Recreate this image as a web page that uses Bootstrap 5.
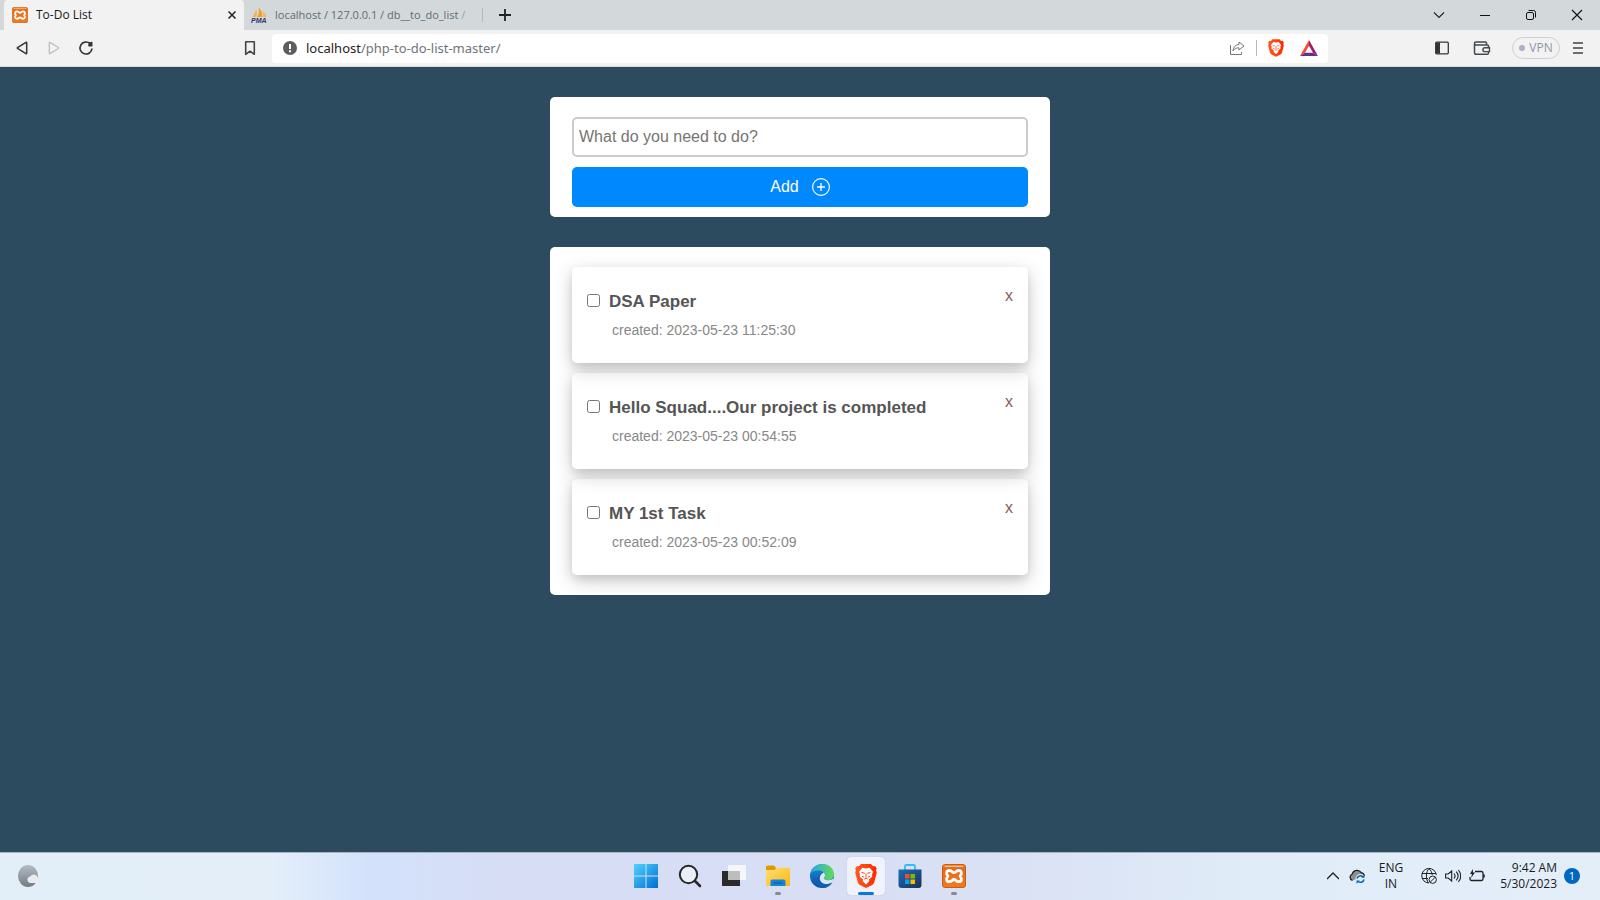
<!DOCTYPE html>
<html lang="en">
<head>
<meta charset="utf-8">
<meta name="viewport" content="width=device-width, initial-scale=1">
<title>To-Do List</title>
<link href="https://cdn.jsdelivr.net/npm/bootstrap@5.3.0/dist/css/bootstrap.min.css" rel="stylesheet">
<style>
  body { font-family: "Open Sans", "Noto Sans", sans-serif; font-size: 12px; line-height: 16px; color: #1b1b1b; background: #2c4b5e; }
  svg { display: block; flex: none; }
  button { color: inherit; }
  .plain { border: 0; background: none; padding: 0; }

  .tabstrip { height: 30px; background: #d3d8db; }
  .tab { width: 240px; height: 30px; }
  .tab.current { background: #f2f2f2; border-radius: 4px 4px 0 0; }
  .tab.other { width: 238px; color: #666b70; font-size: 11px; padding: 0 7px; }
  .tab-title { white-space: nowrap; }
  .tab.other .fade-end { opacity: .5; }
  .split { width: 1px; background: #b4b9bc; }
  .caption { gap: 30px; padding-right: 15px; }

  .toolbar { height: 37px; background: #f2f2f2; border-bottom: 1px solid #d5dadc; }
  .nav-tools { width: 272px; padding: 0 14px; }
  .address { height: 29px; background: #fff; border-radius: 4px; padding: 0 10px 0 11px; }
  .url { font-family: "Noto Sans", "Open Sans", sans-serif; font-size: 13px; color: #6f7479; text-decoration: none; margin-left: 9px; }
  .url b { font-weight: 400; color: #1f2124; }
  .address .split { height: 16px; margin: 0 11px; }
  .side-tools { width: 272px; padding-right: 17px; }
  .wallet { margin: 0 21px 0 24px; }
  .vpn { height: 22px; width: 48px; border: 1px solid #cdcfd2; border-radius: 11px; color: #8d97a5; gap: 4px; }
  .vpn-dot { width: 6px; height: 6px; border-radius: 3px; background: #adb0c4; }
  .menu-btn { margin-left: 13px; }

  .app { font-family: "Liberation Sans", Arial, sans-serif; font-size: 16px; line-height: 20px; padding-top: 30px; }
  .panel { width: 500px; max-width: 100%; background: #fff; border-radius: 5px; padding: 20px 22px; margin: 0 auto 30px; }
  .panel.add { padding-bottom: 10px; }
  .panel.add input { height: 40px; border: 2px solid #ccc; border-radius: 5px; padding: 0 5px; color: #333; }
  .panel.add input::placeholder { color: #757575; opacity: 1; }
  .add-btn { height: 40px; border: 0; border-radius: 5px; background: #08f; color: #fff; gap: 13px; margin-top: 10px; }
  .todo { height: 96px; border-radius: 5px; padding: 19px 15px; box-shadow: 0 4px 8px 0 rgba(0,0,0,.1), 0 6px 20px 0 rgba(0,0,0,.19); }
  .todo + .todo { margin-top: 10px; }
  .todo-head { gap: 9px; }
  .todo input { width: 13px; height: 13px; margin: 8px 0 0; }
  .todo label { font-size: 17px; line-height: 32px; font-weight: 700; color: #555; }
  .todo-date { font-size: 14px; color: #888; padding-left: 25px; line-height: 24px; }
  .todo-x { color: #8b5a60; text-decoration: none; }

  .taskbar { height: 48px; padding-bottom: 1px; border-top: 1px solid #a9b4be; background: linear-gradient(90deg, #e2eef8 0, #e3eef9 17%, #d3e2fb 23%, #d7ddf5 32%, #d8def4 54%, #dbe3f5 66%, #e0ecf8 78%, #e3eef9 100%); }
  .task-side { flex: 1 1 0; }
  .task-mid { gap: 6px; }
  .task-icon { width: 38px; height: 38px; border-radius: 4px; }
  .task-icon.active { background: #f0f3fb; box-shadow: 0 0 1px #9aa5c0; }
  .task-icon::after { content: ""; position: absolute; bottom: 0; height: 3px; border-radius: 2px; }
  .task-icon.open::after { width: 6px; background: #858a96; }
  .task-icon.active::after { width: 16px; background: #0d78d4; }
  .sync { margin: 0 14px 0 10px; }
  .status { margin: 0 15px 0 18px; }
  .clock { margin-right: 7px; }
  .note { width: 16px; height: 16px; border-radius: 8px; background: #0067c0; color: #fff; font-size: 11px; margin-right: 20px; }
</style>
</head>
<body class="min-vh-100 d-flex flex-column">

<svg width="0" height="0" class="position-absolute" aria-hidden="true">
  <defs>
    <linearGradient id="gx" x1="0" y1="0" x2="0" y2="1"><stop offset="0" stop-color="#f79b52"/><stop offset=".15" stop-color="#e96a14"/><stop offset="1" stop-color="#f37a1f"/></linearGradient>
    <linearGradient id="gb" x1="0" y1="0" x2="1" y2="0"><stop offset="0" stop-color="#ff5a1f"/><stop offset="1" stop-color="#ff2a00"/></linearGradient>
    <linearGradient id="gw" x1="0" y1="0" x2="1" y2="1"><stop offset="0" stop-color="#4fd3ff"/><stop offset="1" stop-color="#006fd0"/></linearGradient>
    <linearGradient id="gf" x1="0" y1="0" x2="1" y2="1"><stop offset="0" stop-color="#ffdf73"/><stop offset="1" stop-color="#fbb614"/></linearGradient>
    <linearGradient id="ge" x1="0" y1="0" x2="1" y2="0"><stop offset="0" stop-color="#2aa6e6"/><stop offset="1" stop-color="#62dd4f"/></linearGradient>
    <linearGradient id="ge2" x1="0" y1="0" x2="0" y2="1"><stop offset="0" stop-color="#1b8fdc"/><stop offset="1" stop-color="#0c4ea4"/></linearGradient>
    <linearGradient id="gs" x1="0" y1="0" x2="1" y2="1"><stop offset="0" stop-color="#1a6fb5"/><stop offset="1" stop-color="#1c2f55"/></linearGradient>
    <linearGradient id="gm" x1="0" y1="0" x2="0" y2="1"><stop offset="0" stop-color="#b4bcc6"/><stop offset="1" stop-color="#727a82"/></linearGradient>
    <symbol id="xampp" viewBox="0 0 24 24"><rect x=".5" y=".5" width="23" height="23" rx="2.500" fill="url(#gx)" stroke="#c85e16"/><path d="M3 2.500h18" stroke="#fff" stroke-opacity=".5"/><path d="M7.500 6.500c-3.400 0-3.600 3.600-1.600 5.600C3.900 14.100 4 17.700 7.500 17.700c2.700 0 2.500-2.200 4.500-2.200s1.800 2.200 4.500 2.200c3.500 0 3.600-3.600 1.600-5.600 2-2 1.800-5.600-1.600-5.600-2.700 0-2.500 2.200-4.500 2.200s-1.800-2.200-4.500-2.200z" fill="none" stroke="#fff" stroke-width="2.800" stroke-linejoin="round"/></symbol>
    <symbol id="brave" viewBox="0 0 22 24"><path d="M6 0h10l2 2.300 2-.3 1.800 2.600-.7 1.800.7 2.200-2.400 9.200c-.4 1.500-1.100 2.400-2.200 3.200L11 24l-6.200-3c-1.100-.8-1.800-1.700-2.200-3.200L.2 8.600.9 6.400.2 4.600 2 2l2 .3z" fill="url(#gb)"/><path d="M7.500 3.800l3.500.7 3.500-.7 3.500 4-1 2.800.3 2-3.300 2.800.3 1.600L11 20.500 7.700 17l.3-1.600-3.300-2.800.3-2L4 7.800z" fill="#fff"/><path d="M6.500 8.400l3.300.9M15.500 8.400l-3.300.9M7 12.300l2.200.9M15 12.300l-2.200.9M11 9.500v4M9.200 15.200l1.800-1 1.800 1" stroke="#ff4a17" stroke-width="1" fill="none"/></symbol>
  </defs>
</svg>

<header>
  <div class="tabstrip d-flex ps-1">
    <div class="tab current d-flex align-items-center ps-2 pe-2">
      <svg width="16" height="16"><use href="#xampp"/></svg>
      <span class="tab-title ms-2 flex-grow-1">To-Do List</span>
      <button class="plain" aria-label="Close tab"><svg width="8" height="8" viewBox="0 0 8 8"><path d="M.5.5l7 7M7.500.5l-7 7" stroke="#222" stroke-width="1.500"/></svg></button>
    </div>
    <div class="tab other d-flex align-items-center">
      <svg width="16" height="16" viewBox="0 0 16 16"><path d="M1.500 10C3 7.500 4.500 5 5.200 2.200c.8 2.500.8 5.500.2 7.800z" fill="#f7b04a"/><path d="M6.200 10C8 7 8.300 3.500 7.600.5 10.500 3 11.500 7 11 10z" fill="#f89c1c"/><path d="M11.500 10c.8-2 .7-4-.2-6 2.600 1.500 4 3.800 4 6z" fill="#fbb75c"/><text x="0" y="15.500" font-size="7" font-weight="700" font-style="italic" fill="#34346e" font-family="Liberation Sans">PMA</text></svg>
      <span class="tab-title ms-2 flex-grow-1">localhost / 127.0.0.1 / db__to_do_list <span class="fade-end">/</span></span>
    </div>
    <span class="split my-2"></span>
    <button class="plain px-3" aria-label="New tab"><svg width="12" height="12" viewBox="0 0 12 12"><path d="M6 0v12M0 6h12" stroke="#222" stroke-width="1.800"/></svg></button>
    <div class="caption d-flex align-items-center ms-auto">
      <button class="plain" aria-label="Search tabs"><svg width="16" height="16" viewBox="0 0 16 16"><path d="M3 5.500l5 5 5-5" fill="none" stroke="#222" stroke-width="1.100"/></svg></button>
      <button class="plain" aria-label="Minimize"><svg width="16" height="16" viewBox="0 0 16 16"><path d="M3 8.500h10" stroke="#111"/></svg></button>
      <button class="plain" aria-label="Restore"><svg width="16" height="16" viewBox="0 0 16 16"><rect x="3.500" y="5.500" width="7" height="7" rx="1.500" fill="none" stroke="#111"/><path d="M5.500 3.500h5a2 2 0 0 1 2 2v5" fill="none" stroke="#111"/></svg></button>
      <button class="plain" aria-label="Close"><svg width="16" height="16" viewBox="0 0 16 16"><path d="M3 3l10 10M13 3L3 13" stroke="#111" stroke-width="1.100"/></svg></button>
    </div>
  </div>

  <div class="toolbar d-flex align-items-center">
    <div class="nav-tools d-flex align-items-center gap-3">
      <button class="plain" aria-label="Back"><svg width="16" height="16" viewBox="0 0 16 16"><path d="M12.700 2.700v10.600c0 .4-.4.500-.7.300L3.500 8.500c-.4-.3-.4-.7 0-1L12 2.400c.3-.2.700-.1.700.3z" fill="none" stroke="#333639" stroke-width="1.500"/></svg></button>
      <button class="plain" aria-label="Forward"><svg width="16" height="16" viewBox="0 0 16 16"><path d="M3.300 2.700v10.600c0 .4.400.5.700.3l8.500-5.100c.4-.3.400-.7 0-1L4 2.400c-.3-.2-.7-.1-.7.300z" fill="none" stroke="#bdbfc1" stroke-width="1.300"/></svg></button>
      <button class="plain" aria-label="Reload"><svg width="16" height="16" viewBox="0 0 16 16"><path d="M12 3.500A6 6 0 1 0 14 8.500" fill="none" stroke="#333639" stroke-width="1.700"/><path d="M11 2.500l2.500-.8q1 0 1 1v3q0 .8-.8.800h-2.400q-1.300 0-1.200-1.200z" fill="#333639"/></svg></button>
      <button class="plain ms-auto" aria-label="Bookmark"><svg width="16" height="16" viewBox="0 0 16 16"><path d="M3.700 1.700h8.600v12.600L8 11.200l-4.300 3.100z" fill="none" stroke="#444" stroke-width="1.600" stroke-linejoin="round"/></svg></button>
    </div>
    <div class="address flex-grow-1 d-flex align-items-center">
      <svg width="14" height="14" viewBox="0 0 14 14"><circle cx="7" cy="7" r="7" fill="#5a5e63"/><path d="M7 3v5M7 9.300v2" stroke="#fff" stroke-width="2"/></svg>
      <a class="url me-auto" href="#"><b>localhost</b>/php-to-do-list-master/</a>
      <button class="plain" aria-label="Share"><svg width="16" height="16" viewBox="0 0 16 16"><path d="M1.500 5v9.500h11V12" fill="none" stroke="#777"/><path d="M10 2l5 4-5 4V7.800C7 7.700 5.300 8.800 4 11c.2-4 2.500-6.300 6-6.500z" fill="none" stroke="#777" stroke-linejoin="round"/></svg></button>
      <span class="split"></span>
      <button class="plain" aria-label="Brave Shields"><svg width="16" height="18"><use href="#brave"/></svg></button>
      <button class="plain ms-3" aria-label="Brave Rewards"><svg width="18" height="16" viewBox="0 0 18 16"><path d="M9 0L0 16l5-3.200 4-7z" fill="#ff4724"/><path d="M9 0l9 16-5-3.200-4-7z" fill="#9e1f63"/><path d="M0 16h18l-5-3.200H5z" fill="#662d91"/></svg></button>
    </div>
    <div class="side-tools d-flex align-items-center justify-content-end">
      <button class="plain" aria-label="Sidebar"><svg width="14" height="14" viewBox="0 0 14 14"><rect x=".7" y="1.200" width="12.600" height="11.600" rx="1" fill="none" stroke="#333639" stroke-width="1.300"/><path d="M1 1.500h4v11H1z" fill="#333639"/></svg></button>
      <button class="plain wallet" aria-label="Wallet"><svg width="18" height="16" viewBox="0 0 18 16"><path d="M13.500 4.500V3a1 1 0 0 0-1-1H3a1.500 1.500 0 0 0 0 3h11.500a1 1 0 0 1 1 1v7a1.300 1.300 0 0 1-1.300 1.300H3.300A1.800 1.800 0 0 1 1.500 12.500v-9" fill="none" stroke="#444a50" stroke-width="1.500"/><path d="M16.500 7.800h-4.700a1.900 1.900 0 0 0 0 3.800h4.700z" fill="#f2f2f2" stroke="#444a50" stroke-width="1.400"/></svg></button>
      <button class="plain vpn d-flex align-items-center justify-content-center"><span class="vpn-dot"></span>VPN</button>
      <button class="plain menu-btn" aria-label="Menu"><svg width="10" height="12" viewBox="0 0 10 12"><path d="M0 1h10M0 6h10M0 11h10" stroke="#444" stroke-width="1.600"/></svg></button>
    </div>
  </div>
</header>

<main class="app flex-grow-1">
  <form class="panel add">
    <input class="w-100 d-block" type="text" placeholder="What do you need to do?" aria-label="What do you need to do?">
    <button type="button" class="add-btn w-100 d-flex align-items-center justify-content-center">Add <svg width="18" height="18" viewBox="0 0 18 18"><circle cx="9" cy="9" r="8.400" fill="none" stroke="#fff" stroke-width="1.100"/><path d="M9 5v8M5 9h8" stroke="#fff" stroke-width="1.300"/></svg></button>
  </form>

  <section class="panel">
    <div class="todo d-flex">
      <div class="flex-grow-1">
        <div class="todo-head d-flex align-items-start"><input type="checkbox" id="t1"><label for="t1">DSA Paper</label></div>
        <div class="todo-date">created: 2023-05-23 11:25:30</div>
      </div>
      <a class="todo-x" href="#" aria-label="Remove DSA Paper">x</a>
    </div>
    <div class="todo d-flex">
      <div class="flex-grow-1">
        <div class="todo-head d-flex align-items-start"><input type="checkbox" id="t2"><label for="t2">Hello Squad....Our project is completed</label></div>
        <div class="todo-date">created: 2023-05-23 00:54:55</div>
      </div>
      <a class="todo-x" href="#" aria-label="Remove Hello Squad">x</a>
    </div>
    <div class="todo d-flex">
      <div class="flex-grow-1">
        <div class="todo-head d-flex align-items-start"><input type="checkbox" id="t3"><label for="t3">MY 1st Task</label></div>
        <div class="todo-date">created: 2023-05-23 00:52:09</div>
      </div>
      <a class="todo-x" href="#" aria-label="Remove MY 1st Task">x</a>
    </div>
  </section>
</main>

<footer class="taskbar d-flex align-items-center">
  <div class="task-side d-flex">
    <button class="plain ms-3" aria-label="Weather"><svg width="24" height="24" viewBox="0 0 24 24"><ellipse cx="12" cy="12" rx="10" ry="11" fill="url(#gm)"/><path d="M14 19a3.300 3.300 0 0 1 .3-6.500 4 4 0 0 1 7.200.8A2.900 2.900 0 0 1 22 19z" fill="#e9ebee"/></svg></button>
  </div>
  <div class="task-mid d-flex">
    <button class="plain task-icon position-relative d-flex align-items-center justify-content-center" aria-label="Start"><svg width="24" height="24" viewBox="0 0 24 24"><path d="M0 0h11.500v11.500H0zM12.500 0H24v11.500H12.500zM0 12.500h11.500V24H0zM12.500 12.500H24V24H12.500z" fill="url(#gw)"/></svg></button>
    <button class="plain task-icon position-relative d-flex align-items-center justify-content-center" aria-label="Search"><svg width="24" height="24" viewBox="0 0 24 24"><circle cx="10.500" cy="10.500" r="8.700" fill="#e9eef8" stroke="#262626" stroke-width="2"/><path d="M17 17l5 5" stroke="#262626" stroke-width="2.600" stroke-linecap="round"/></svg></button>
    <button class="plain task-icon position-relative d-flex align-items-center justify-content-center" aria-label="Task view"><svg width="24" height="24" viewBox="0 0 24 24"><path d="M0 7h18v15H0z" fill="#2b2b2b"/><path d="M6 1h18v15H6z" fill="#f5f6f7"/><path d="M6 7h12v9H6z" fill="#bdbdbd"/></svg></button>
    <button class="plain task-icon open position-relative d-flex align-items-center justify-content-center" aria-label="File Explorer"><svg width="24" height="24" viewBox="0 0 24 24"><path d="M0 3a1.500 1.500 0 0 1 1.500-1.500H8L10 4v4H0z" fill="#dc9a08"/><path d="M0 6h8.500l2-2.200h12A1.500 1.500 0 0 1 24 5.300V22H0z" fill="url(#gf)"/><path d="M4.500 22v-5a1.500 1.500 0 0 1 1.500-1.500h12a1.500 1.500 0 0 1 1.500 1.500v5z" fill="#1783d8"/><path d="M7.500 19h9" stroke="#0b5fa8" stroke-width="1.200"/></svg></button>
    <button class="plain task-icon position-relative d-flex align-items-center justify-content-center" aria-label="Edge"><svg width="24" height="24" viewBox="0 0 24 24"><circle cx="12" cy="12" r="12" fill="url(#ge2)"/><path d="M.8 9C2.300 3.500 6.800 0 12 0c7 0 12 4.800 12 10.500 0 3.500-2.800 5.700-6 5.700-2.500 0-4.200-.9-4.200-1.900 0-.8 1.200-1.300 1.200-3.100 0-2.700-3-4.700-6.500-4.700C5 6.500 2 7.500.8 9z" fill="url(#ge)"/><path d="M13.800 14.300c0-.8 1.200-1.300 1.200-3.100 0-1-.5-2-1.300-2.800-2.200.6-4.200 2.800-4.200 5.600 0 3.500 3 6.200 7 6.200 2.300 0 4.500-.8 6.200-2.200l1.300-4.500c-1 1.800-3.200 2.700-6 2.700-2.500 0-4.200-.9-4.200-1.900z" fill="#dde4f6"/><path d="M9.500 14c0 3.500 3 6.200 7 6.200 2 0 4-.6 5.700-1.800A12 12 0 0 1 12 24c-4-1-6-4.500-5.500-8 .3-3 3-6.500 7.200-7.600-2.200 1-4.200 2.800-4.200 5.600z" fill="#0f5fb4"/></svg></button>
    <button class="plain task-icon active position-relative d-flex align-items-center justify-content-center" aria-label="Brave"><svg width="22" height="24"><use href="#brave"/></svg></button>
    <button class="plain task-icon position-relative d-flex align-items-center justify-content-center" aria-label="Store"><svg width="24" height="24" viewBox="0 0 24 24"><path d="M7 6V2.300A1.300 1.300 0 0 1 8.300 1h7.400A1.300 1.300 0 0 1 17 2.300V6" fill="none" stroke="#35bdf0" stroke-width="1.800"/><path d="M.5 5.500h23V21a3 3 0 0 1-3 3h-17a3 3 0 0 1-3-3z" fill="url(#gs)"/><path d="M7 10h4.500v4.500H7z" fill="#f25022"/><path d="M12.500 10H17v4.500h-4.500z" fill="#7fba00"/><path d="M7 15.500h4.500V20H7z" fill="#00a4ef"/><path d="M12.500 15.500H17V20h-4.500z" fill="#ffb900"/></svg></button>
    <button class="plain task-icon open position-relative d-flex align-items-center justify-content-center" aria-label="XAMPP"><svg width="24" height="24"><use href="#xampp"/></svg></button>
  </div>
  <div class="task-side d-flex align-items-center justify-content-end">
    <button class="plain" aria-label="Hidden icons"><svg width="12" height="12" viewBox="0 0 12 12"><path d="M0 9l6-6 6 6" fill="none" stroke="#222" stroke-width="1.400"/></svg></button>
    <svg class="sync" width="16" height="16" viewBox="0 0 16 16"><path d="M3.500 12.500a3.500 3.500 0 0 1-.3-6.500 5 5 0 0 1 9-1.300A4 4 0 0 1 15.500 8" fill="#8e8e8e" stroke="#222" stroke-width="1.300"/><circle cx="11.500" cy="11" r="5" fill="#e2eef8"/><path d="M8 10.500a3.500 3.500 0 0 1 6-1.500M15 11.500a3.500 3.500 0 0 1-6 1.700" fill="none" stroke="#0067c0" stroke-width="1.500"/><path d="M15.500 6.500v3.300h-3.300zM7.500 15.800v-3.300h3.300z" fill="#0067c0"/></svg>
    <div class="text-center">ENG<br>IN</div>
    <div class="status d-flex gap-2">
      <svg width="16" height="16" viewBox="0 0 16 16"><g fill="none" stroke="#222"><path d="M8 15A7.300 7.300 0 1 1 15.300 7M1 5.500h14M1 10.500h6M8 .7C5 3.500 4.300 10 7.300 15M8 .7c2 1.700 3 4 3.200 6.300"/><circle cx="11.700" cy="11.700" r="3.700"/><path d="M9.200 14.200l5-5"/></g></svg>
      <svg width="16" height="16" viewBox="0 0 16 16"><path d="M.6 6v4h2.600L6.700 13V3L3.200 6zM9 5.500c1.300 1.500 1.300 3.500 0 5M11.200 3.700c2.300 2.600 2.300 6 0 8.600M13.300 2c3.200 3.500 3.200 8.500 0 12" fill="none" stroke="#222" stroke-width="1.100"/></svg>
      <svg width="16" height="16" viewBox="0 0 16 16"><path d="M6 3.500h6.500A1.500 1.500 0 0 1 14 5v6a1.500 1.500 0 0 1-1.500 1.500h-10A1.500 1.500 0 0 1 1 11V9" fill="none" stroke="#222" stroke-width="1.300"/><path d="M15 6.500v3" stroke="#222" stroke-width="1.600"/><path d="M3.800 1L1 6h2L2 10l4-5.500H4z" fill="#222"/></svg>
    </div>
    <div class="clock text-end">9:42 AM<br>5/30/2023</div>
    <span class="note d-flex align-items-center justify-content-center">1</span>
  </div>
</footer>

<script src="https://cdn.jsdelivr.net/npm/bootstrap@5.3.0/dist/js/bootstrap.bundle.min.js"></script>
</body>
</html>
